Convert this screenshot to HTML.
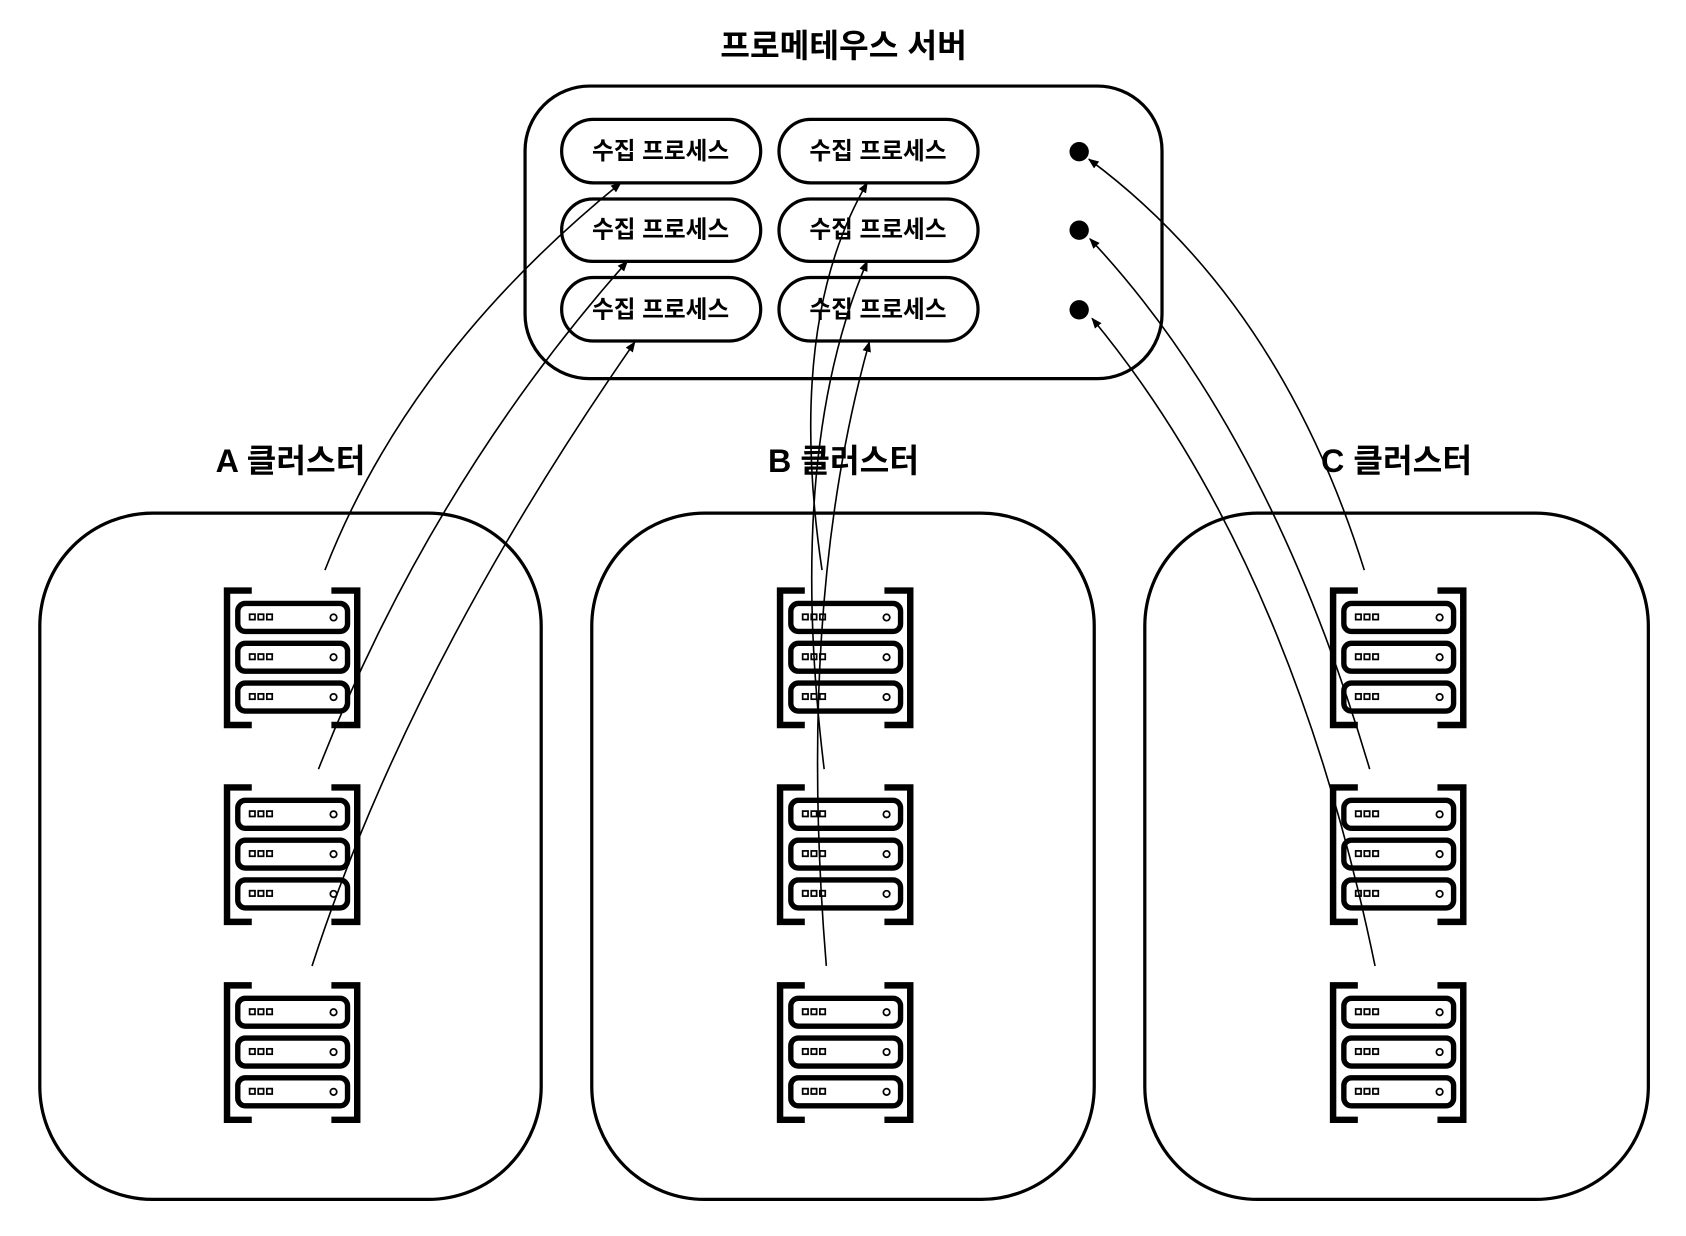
<!DOCTYPE html>
<html><head><meta charset="utf-8"><style>
html,body{margin:0;padding:0;background:#fff;}
svg{display:block}
text{font-family:"Liberation Sans","Noto Sans CJK KR",sans-serif;font-weight:bold;fill:#000}
</style></head><body>
<svg width="1686" height="1236" viewBox="0 0 1567 1149" preserveAspectRatio="none" xmlns="http://www.w3.org/2000/svg">
<defs>
<marker id="ah" markerWidth="10" markerHeight="8" refX="9" refY="4" orient="auto" markerUnits="userSpaceOnUse">
<path d="M0,0 L10,4 L0,8 Z" fill="#000"/>
</marker>
<g id="srv" fill="none" stroke="#000">
<path d="M234,549 H211 V674 H234" stroke-width="6"/>
<path d="M308,549 H332 V674 H308" stroke-width="6"/>
<rect x="221" y="561" width="102" height="26" rx="7" stroke-width="5"/>
<rect x="221" y="598" width="102" height="26" rx="7" stroke-width="5"/>
<rect x="221" y="635" width="102" height="26" rx="7" stroke-width="5"/>
<g stroke-width="1.6">
<rect x="232" y="571" width="5" height="5"/><rect x="240" y="571" width="5" height="5"/><rect x="248" y="571" width="5" height="5"/>
<rect x="232" y="608" width="5" height="5"/><rect x="240" y="608" width="5" height="5"/><rect x="248" y="608" width="5" height="5"/>
<rect x="232" y="645" width="5" height="5"/><rect x="240" y="645" width="5" height="5"/><rect x="248" y="645" width="5" height="5"/>
<circle cx="310" cy="574" r="3"/><circle cx="310" cy="611" r="3"/><circle cx="310" cy="648" r="3"/>
</g>
</g>
</defs>

<text x="784" y="53" font-size="30" text-anchor="middle">프로메테우스 서버</text>
<rect x="488" y="80" width="592" height="272" rx="60" fill="none" stroke="#000" stroke-width="3"/>
<g fill="none" stroke="#000" stroke-width="3">
<rect x="522" y="111" width="185" height="59" rx="29.5"/>
<rect x="724" y="111" width="185" height="59" rx="29.5"/>
<rect x="522" y="185" width="185" height="58" rx="29"/>
<rect x="724" y="185" width="185" height="58" rx="29"/>
<rect x="522" y="258" width="185" height="59" rx="29.5"/>
<rect x="724" y="258" width="185" height="59" rx="29.5"/>
</g>
<g font-size="22" text-anchor="middle">
<text x="614" y="148">수집 프로세스</text><text x="816" y="148">수집 프로세스</text>
<text x="614" y="221">수집 프로세스</text><text x="816" y="221">수집 프로세스</text>
<text x="614" y="295">수집 프로세스</text><text x="816" y="295">수집 프로세스</text>
</g>
<circle cx="1003" cy="141" r="9"/><circle cx="1003" cy="214" r="9"/><circle cx="1003" cy="288" r="9"/>

<g font-size="30">
<text x="270" y="439" text-anchor="middle">A 클러스터</text>
<text x="784" y="439" text-anchor="middle">B 클러스터</text>
<text x="1298" y="439" text-anchor="middle">C 클러스터</text>
</g>
<g fill="none" stroke="#000" stroke-width="3">
<rect x="37" y="477" width="466" height="638" rx="105"/>
<rect x="550" y="477" width="467" height="638" rx="105"/>
<rect x="1064" y="477" width="468" height="638" rx="105"/>
</g>

<use href="#srv"/><use href="#srv" y="183"/><use href="#srv" y="367"/>
<use href="#srv" x="514"/><use href="#srv" x="514" y="183"/><use href="#srv" x="514" y="367"/>
<use href="#srv" x="1028"/><use href="#srv" x="1028" y="183"/><use href="#srv" x="1028" y="367"/>

<g fill="none" stroke="#000" stroke-width="1.5" marker-end="url(#ah)">
<path d="M302,530 Q380,330 577,170"/>
<path d="M296,715 Q400,450 583,243"/>
<path d="M290,898 Q380,620 590,318"/>
<path d="M764,530 Q730,300 806,170"/>
<path d="M766,715 Q730,420 806,243"/>
<path d="M768,898 Q740,560 808,318"/>
<path d="M1268,530 Q1190,280 1012,148"/>
<path d="M1273,715 Q1180,400 1013,222"/>
<path d="M1278,898 Q1200,520 1015,296"/>
</g>
</svg>
</body></html>
